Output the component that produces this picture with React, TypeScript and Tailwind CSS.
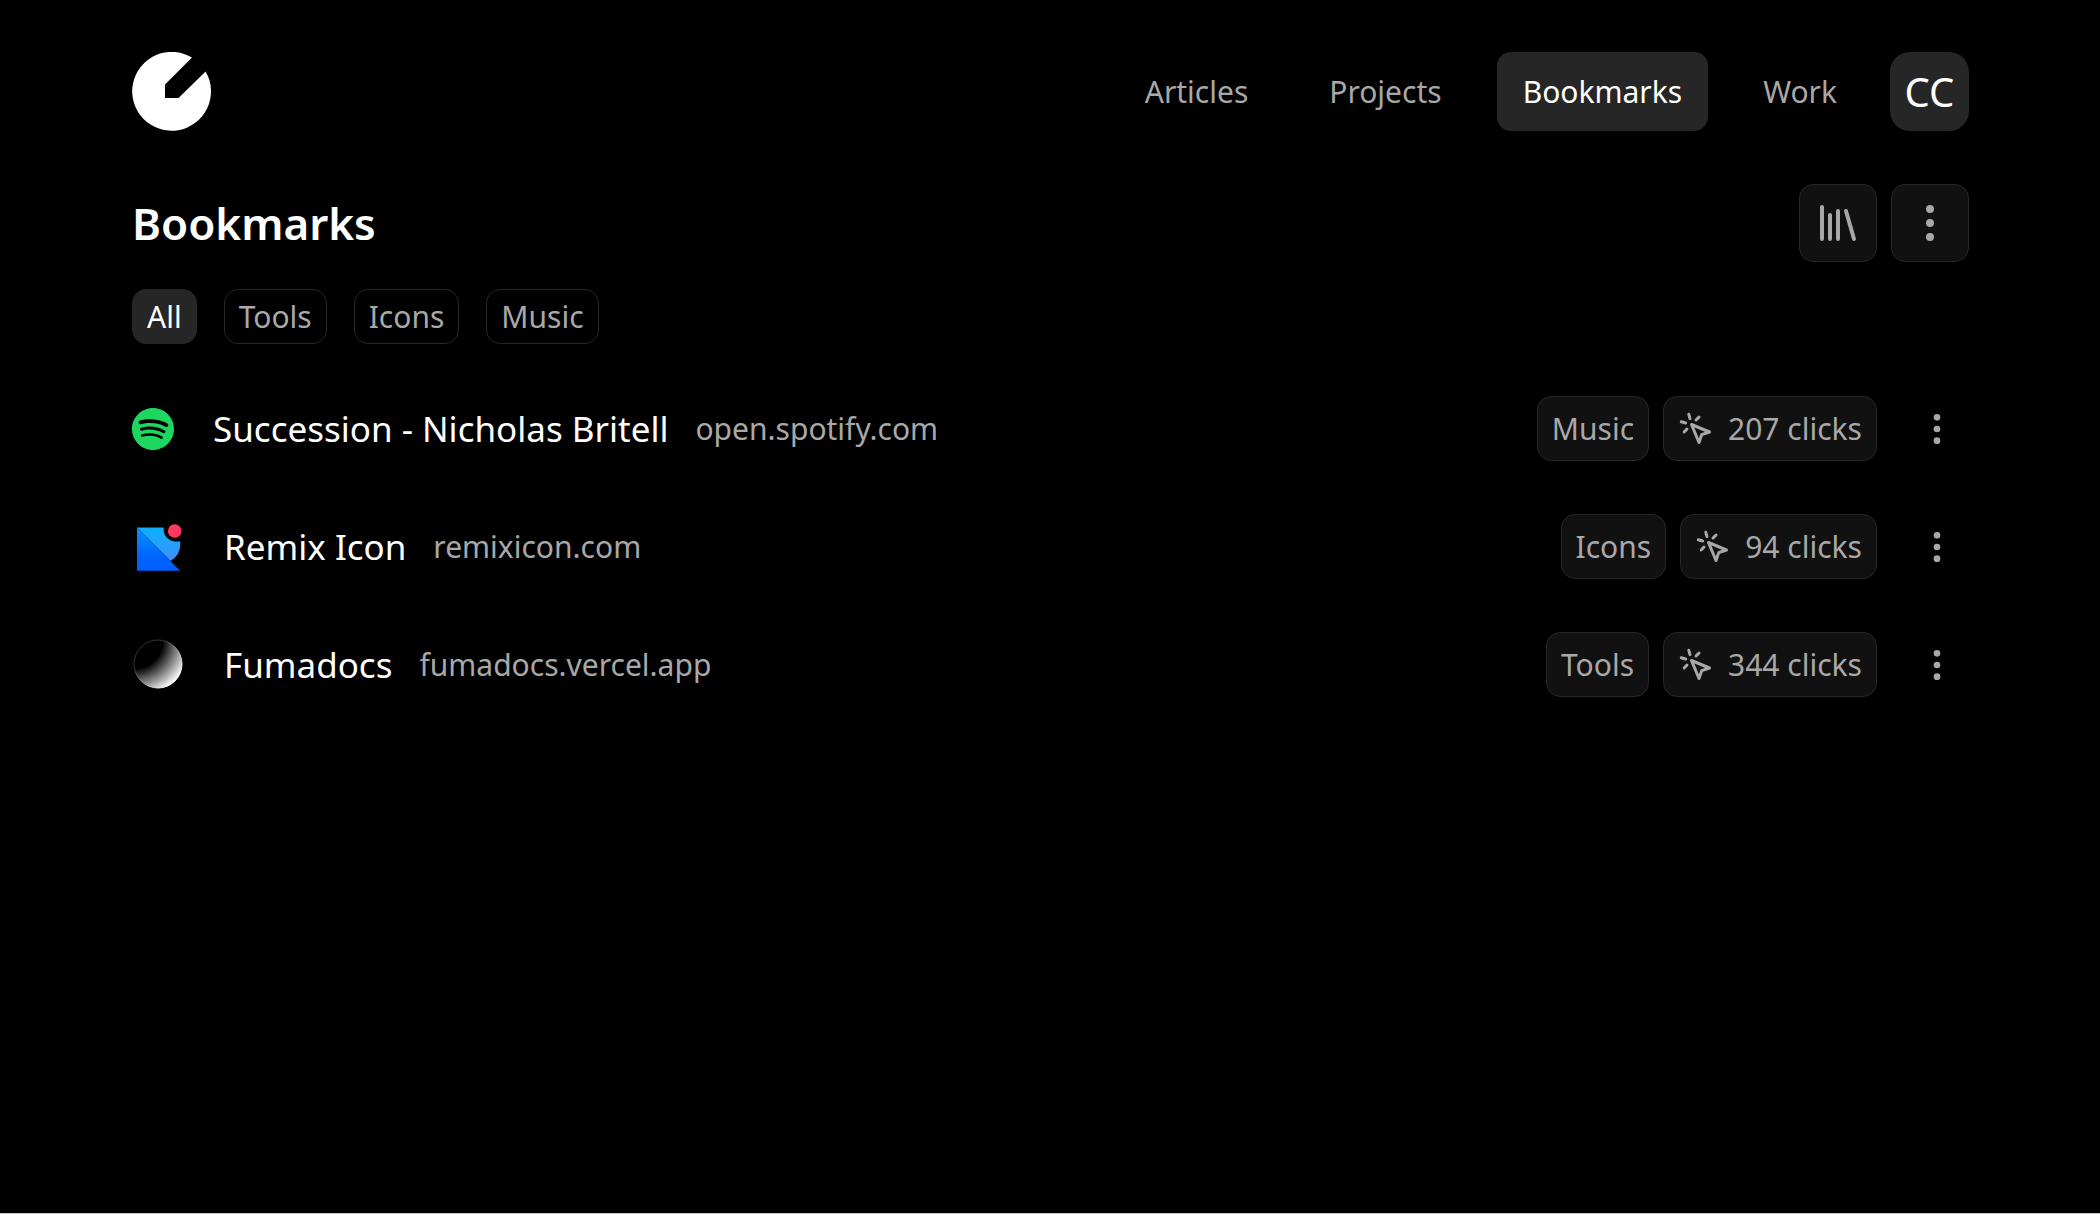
import type { ReactNode } from 'react';
import { EllipsisVertical, Library } from 'lucide-react';
import { SiSpotify } from 'react-icons/si';

type Bookmark = {
  title: string;
  domain: string;
  tag: string;
  clicks: number;
  icon: ReactNode;
};

function Logo() {
  return (
    <svg viewBox="0 0 79 79" className="size-[79px]" fill="#fff" aria-hidden="true">
      <path d="M60 5.6A39.4 39.4 0 1 0 73.6 19.4L46.5 46H33V32.5Z" />
    </svg>
  );
}

function RemixLogo() {
  return (
    <svg viewBox="0 0 53 53" className="size-[53px]" aria-hidden="true">
      <defs>
        <linearGradient id="remix-light" x1="0" y1="0" x2="0" y2="1">
          <stop offset="0" stopColor="#0cb0fc" />
          <stop offset="1" stopColor="#3d90ff" />
        </linearGradient>
        <linearGradient id="remix-dark" x1="0" y1="0" x2="0" y2="1">
          <stop offset="0" stopColor="#0593ff" />
          <stop offset="0.7" stopColor="#0062ff" />
          <stop offset="1" stopColor="#0060ff" />
        </linearGradient>
      </defs>
      <path d="M5 7.5H31.7V11A11.5 11.5 0 0 0 43 21.4H48.3V23.5A20 20 0 0 1 38.5 41Z" fill="url(#remix-light)" />
      <path d="M5 7.5 48 50.8H5Z" fill="url(#remix-dark)" />
      <circle cx="42.7" cy="11" r="6.8" fill="#ff3860" />
    </svg>
  );
}

function FumadocsLogo() {
  return (
    <svg viewBox="0 0 53 53" className="size-[53px]" aria-hidden="true">
      <defs>
        <radialGradient id="fuma-fill" cx="0" cy="0" r="1.2" fx="0" fy="0">
          <stop offset="0.5" stopColor="#000" />
          <stop offset="1" stopColor="#fff" />
        </radialGradient>
        <linearGradient id="fuma-ring" x1="0" y1="0" x2="1" y2="1">
          <stop offset="0.3" stopColor="#333" />
          <stop offset="0.8" stopColor="#fff" />
        </linearGradient>
      </defs>
      <circle cx="26" cy="26" r="24" fill="url(#fuma-fill)" stroke="url(#fuma-ring)" />
    </svg>
  );
}

function ClickIcon() {
  return (
    <svg
      viewBox="0 0 24 24"
      className="size-9"
      fill="none"
      stroke="currentColor"
      strokeWidth="2"
      strokeLinecap="round"
      strokeLinejoin="round"
      aria-hidden="true"
    >
      <path d="m9 9 5 12 1.8-5.2L21 14Z" />
      <path d="M7.2 2.2 8 5.1" />
      <path d="m5.1 8-2.9-.8" />
      <path d="M14 4.1 12 6" />
      <path d="m6 12-1.9 2" />
    </svg>
  );
}

const navItems = ['Articles', 'Projects', 'Bookmarks', 'Work'];
const filters = ['All', 'Tools', 'Icons', 'Music'];

const bookmarks: Bookmark[] = [
  {
    title: 'Succession - Nicholas Britell',
    domain: 'open.spotify.com',
    tag: 'Music',
    clicks: 207,
    icon: <SiSpotify className="size-[42px] text-[#1ed760]" aria-hidden="true" />,
  },
  { title: 'Remix Icon', domain: 'remixicon.com', tag: 'Icons', clicks: 94, icon: <RemixLogo /> },
  { title: 'Fumadocs', domain: 'fumadocs.vercel.app', tag: 'Tools', clicks: 344, icon: <FumadocsLogo /> },
];

const chip = 'flex items-center gap-3.5 rounded-[14px] border border-[#262626] bg-[#111111] px-3.5 py-[9px]';
const iconButton =
  'flex size-[78px] items-center justify-center rounded-[14px] border border-[#262626] bg-[#111111]';

export default function App() {
  return (
    <div className="min-h-screen border-b border-[#c8c8c8] bg-black pt-[52px] pr-[131px] pb-12 pl-[132px] font-['Noto_Sans',sans-serif] text-[30px] leading-[45px] text-[#a8a8a8]">
      <header className="flex items-center justify-between">
        <a href="#home" aria-label="Home">
          <Logo />
        </a>
        <div className="flex items-center gap-[27px]">
          <nav className="flex items-center gap-[29px]" aria-label="Main">
            {navItems.map((item) => (
              <a
                key={item}
                href={`#${item.toLowerCase()}`}
                aria-current={item === 'Bookmarks' ? 'page' : undefined}
                className={
                  item === 'Bookmarks'
                    ? 'rounded-[14px] bg-[#262626] px-[26px] py-[17px] text-white'
                    : 'rounded-[14px] px-[26px] py-[17px]'
                }
              >
                {item}
              </a>
            ))}
          </nav>
          <button
            type="button"
            aria-label="Account CC"
            className="flex size-[79px] items-center justify-center rounded-[20px] bg-[#262626] text-[40px] text-white"
          >
            CC
          </button>
        </div>
      </header>

      <main>
        <div className="mt-[53px] flex items-center justify-between">
          <h1 className="text-[44px] font-semibold text-white">Bookmarks</h1>
          <div className="flex gap-3.5">
            <button type="button" aria-label="Collections" className={iconButton}>
              <Library className="size-12" />
            </button>
            <button type="button" aria-label="More options" className={iconButton}>
              <EllipsisVertical className="size-12" />
            </button>
          </div>
        </div>

        <div className="mt-[27px] flex gap-[27px]" role="group" aria-label="Filter by tag">
          {filters.map((filter) => (
            <button
              key={filter}
              type="button"
              aria-pressed={filter === 'All'}
              className={
                filter === 'All'
                  ? 'rounded-[14px] border border-[#262626] bg-[#262626] px-3.5 py-1 text-white'
                  : 'rounded-[14px] border border-[#262626] px-3.5 py-1'
              }
            >
              {filter}
            </button>
          ))}
        </div>

        <ul className="mt-[52px] flex flex-col gap-[53px]">
          {bookmarks.map((bookmark) => (
            <li key={bookmark.title} className="flex items-center justify-between">
              <a href={`https://${bookmark.domain}`} className="flex items-center gap-[39px]">
                {bookmark.icon}
                <span className="flex items-center gap-[27px]">
                  <span className="text-[35px] text-white">{bookmark.title}</span>
                  <span>{bookmark.domain}</span>
                </span>
              </a>
              <div className="flex items-center gap-[27px]">
                <div className="flex gap-3.5">
                  <span className={chip}>{bookmark.tag}</span>
                  <span className={chip}>
                    <ClickIcon />
                    {bookmark.clicks} clicks
                  </span>
                </div>
                <button
                  type="button"
                  aria-label={`Options for ${bookmark.title}`}
                  className="flex size-[65px] items-center justify-center"
                >
                  <EllipsisVertical className="size-10" />
                </button>
              </div>
            </li>
          ))}
        </ul>
      </main>
    </div>
  );
}
